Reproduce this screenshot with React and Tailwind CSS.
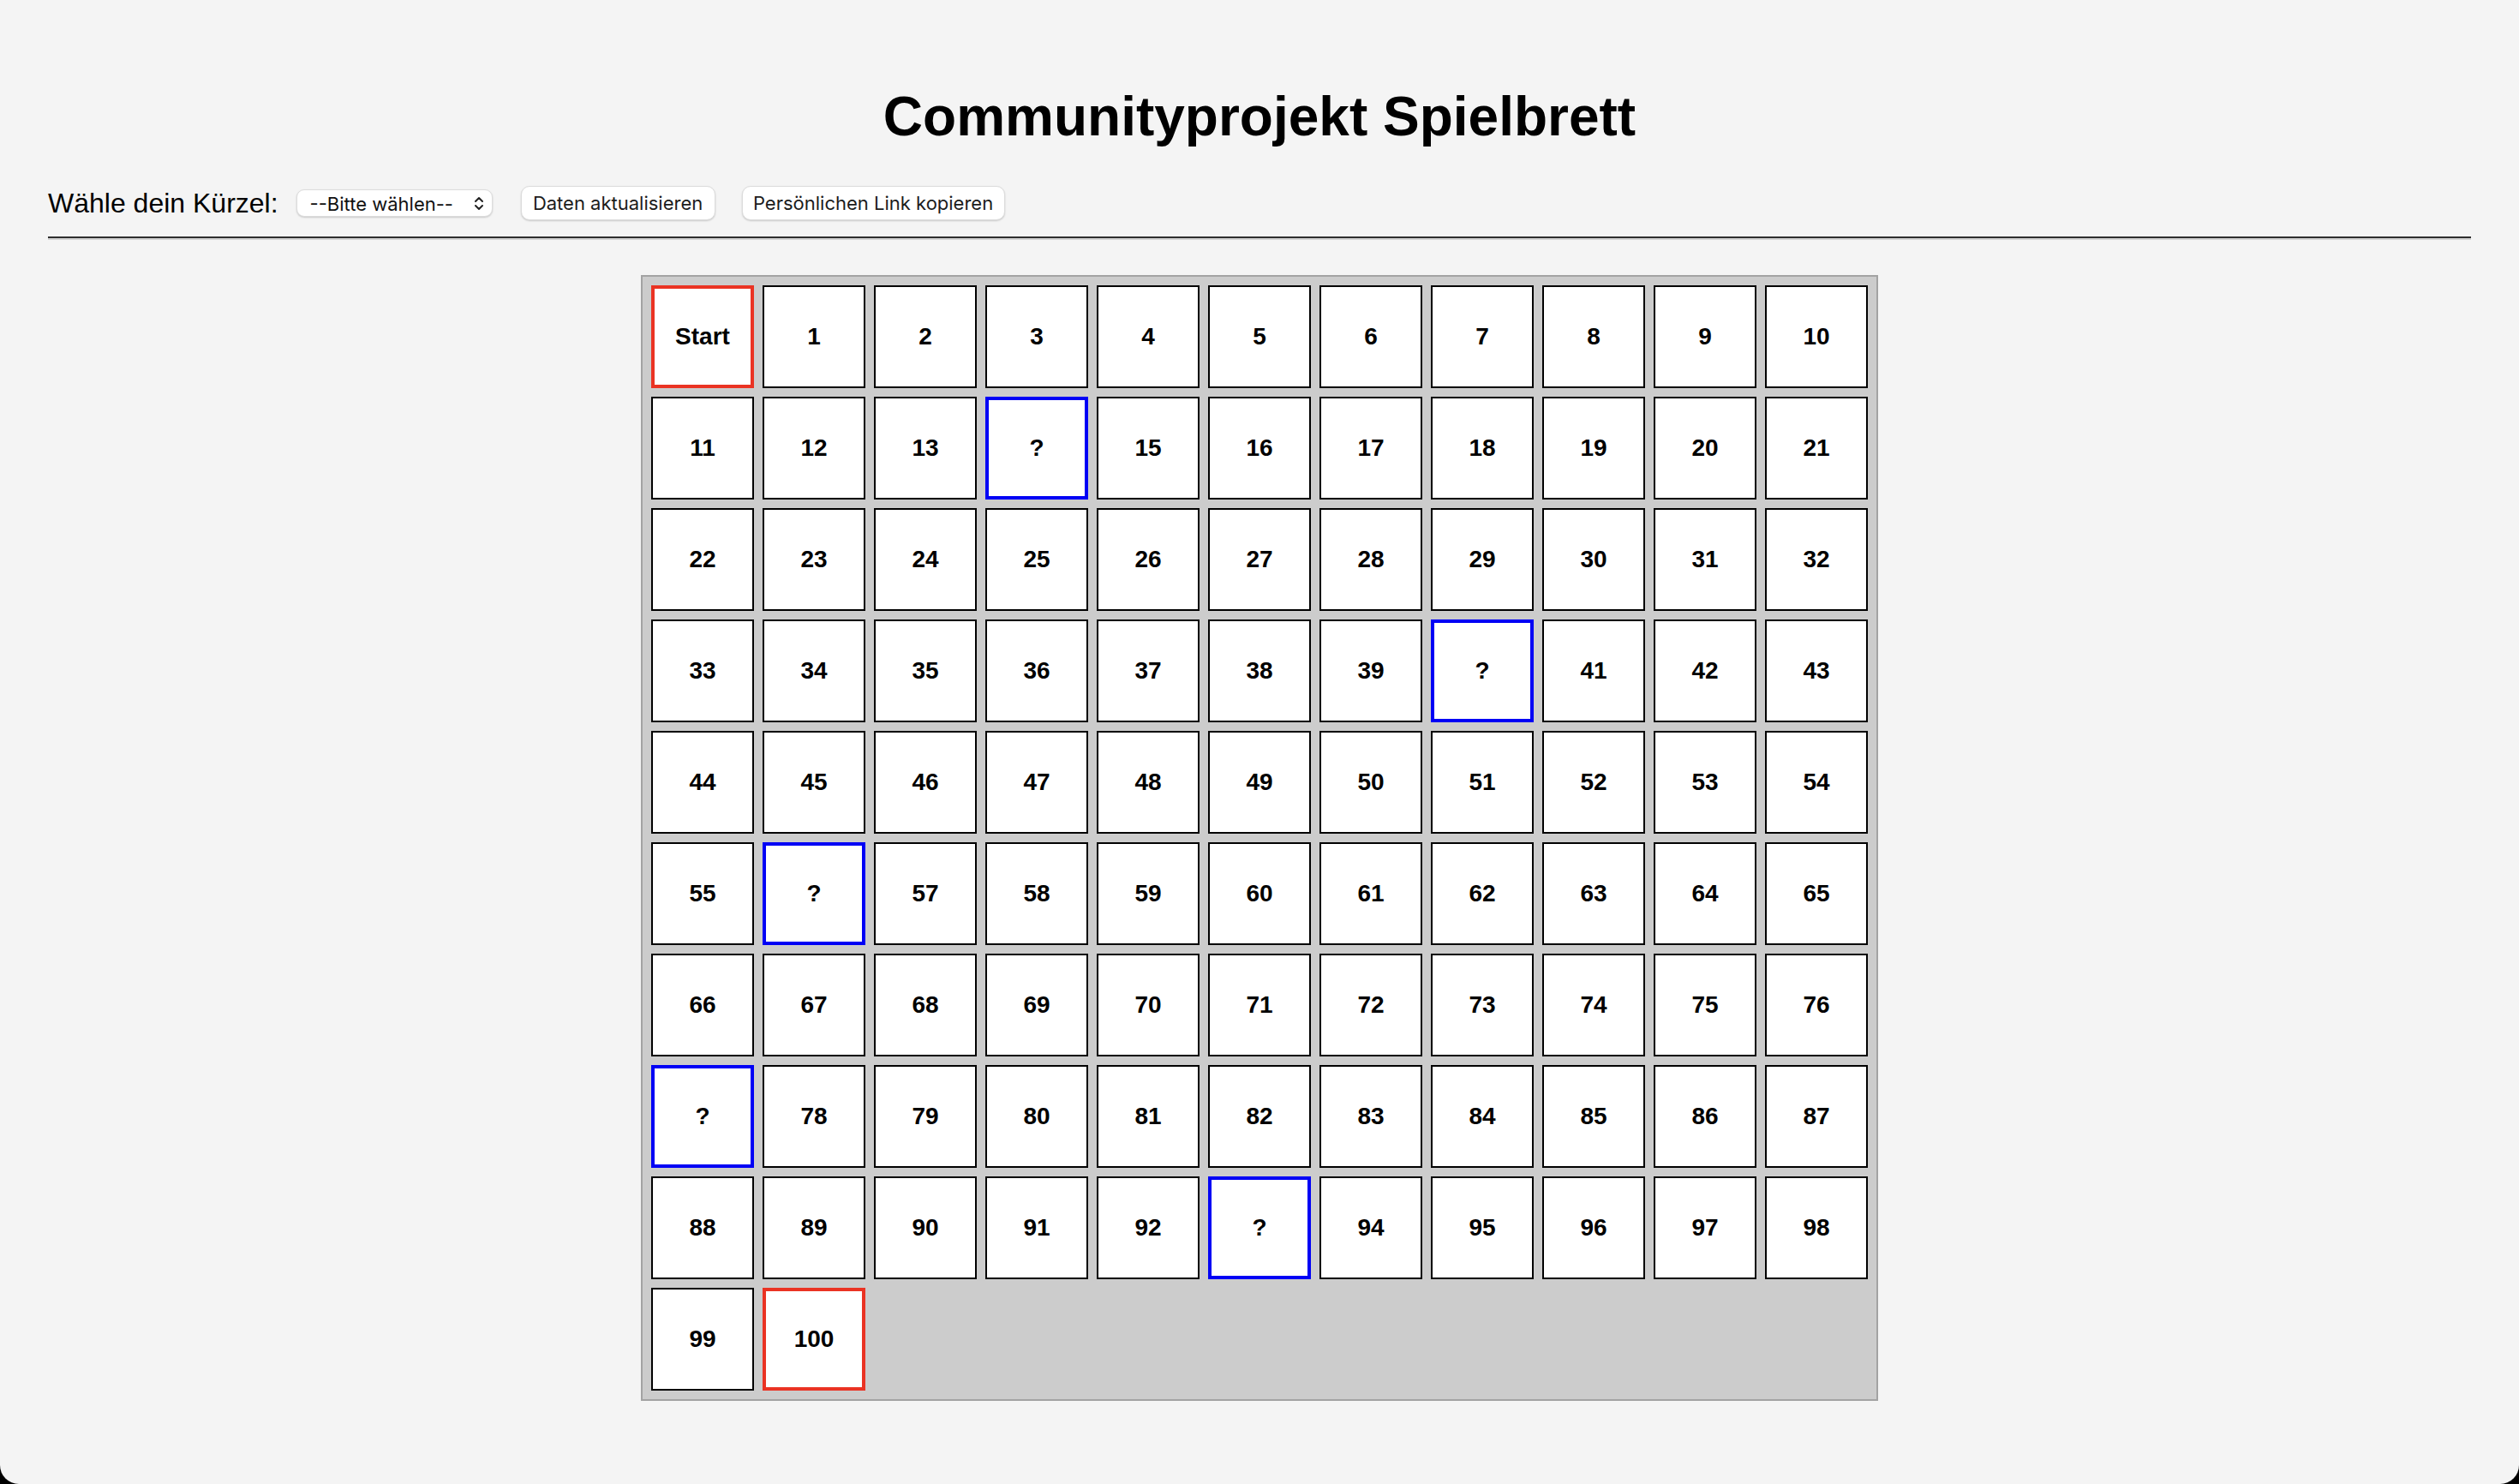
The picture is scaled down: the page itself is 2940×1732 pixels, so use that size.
import { useState } from "react";

const BLUE = [14, 40, 56, 77, 93];

function Cell({ index }) {
  let label = String(index);
  let border = "border-2 border-black";
  if (index === 0) {
    label = "Start";
    border = "border-4 border-[#ea3323]";
  } else if (index === 100) {
    border = "border-4 border-[#ea3323]";
  } else if (BLUE.includes(index)) {
    label = "?";
    border = "border-4 border-[#0000f5]";
  }
  return (
    <div
      className={`w-[120px] h-[120px] bg-white flex items-center justify-center font-bold text-[28px] text-black ${border}`}
    >
      {label}
    </div>
  );
}

export default function App() {
  const [kuerzel, setKuerzel] = useState("");
  const cells = Array.from({ length: 101 }, (_, i) => i);

  return (
    <div className="bg-black">
      <div
        className="h-[1732px] bg-[#f4f4f4] rounded-b-[22px] px-[56px] text-black"
        style={{ fontFamily: '"Liberation Sans", Arial, sans-serif' }}
      >
        <h1 className="pt-[99px] h-[173px] text-center text-[64px] leading-[74px] font-bold">
          Communityprojekt Spielbrett
        </h1>

        {/* Controls */}
        <div className="mt-[44px] h-[40px] flex items-center">
          <label className="text-[32px] leading-[37px]">Wähle dein Kürzel:</label>
          <div className="relative ml-[21px]">
            <select
              value={kuerzel}
              onChange={(e) => setKuerzel(e.target.value)}
              className="appearance-none w-[229px] h-[32px] pl-[15px] pr-[30px] bg-white rounded-[9px] border border-[#dcdcdc] shadow-[0_1px_2px_rgba(0,0,0,0.18)] text-[22px] text-[#111] outline-none"
              style={{ fontFamily: "Inter, sans-serif" }}
            >
              <option value="">--Bitte wählen--</option>
            </select>
            <svg
              className="absolute right-[10px] top-[8px] pointer-events-none"
              width="12"
              height="17"
              viewBox="0 0 12 17"
              fill="none"
              stroke="#222"
              strokeWidth="2"
              strokeLinecap="round"
              strokeLinejoin="round"
            >
              <path d="M2 6 L6 2 L10 6" />
              <path d="M2 11 L6 15 L10 11" />
            </svg>
          </div>
          <button
            className="ml-[33px] h-[40px] w-[227px] bg-white rounded-[10px] border border-[#dcdcdc] shadow-[0_1px_2px_rgba(0,0,0,0.18)] text-[22px] text-[#1c1c1c]"
            style={{ fontFamily: "Inter, sans-serif" }}
          >
            Daten aktualisieren
          </button>
          <button
            className="ml-[31px] h-[40px] w-[307px] bg-white rounded-[10px] border border-[#dcdcdc] shadow-[0_1px_2px_rgba(0,0,0,0.18)] text-[22px] text-[#1c1c1c]"
            style={{ fontFamily: "Inter, sans-serif" }}
          >
            Persönlichen Link kopieren
          </button>
        </div>

        <div className="mt-[19px] h-[4px] border-t-2 border-t-[#2e2e2e] border-b-2 border-b-[#d2d2d2]" />

        {/* Board */}
        <div className="mt-[41px] mx-auto w-[1444px] border-2 border-[#a3a3a3] bg-[#cccccc] p-[10px]">
          <div className="grid grid-cols-[repeat(11,120px)] gap-[10px]">
            {cells.map((i) => (
              <Cell key={i} index={i} />
            ))}
          </div>
        </div>
      </div>
    </div>
  );
}
